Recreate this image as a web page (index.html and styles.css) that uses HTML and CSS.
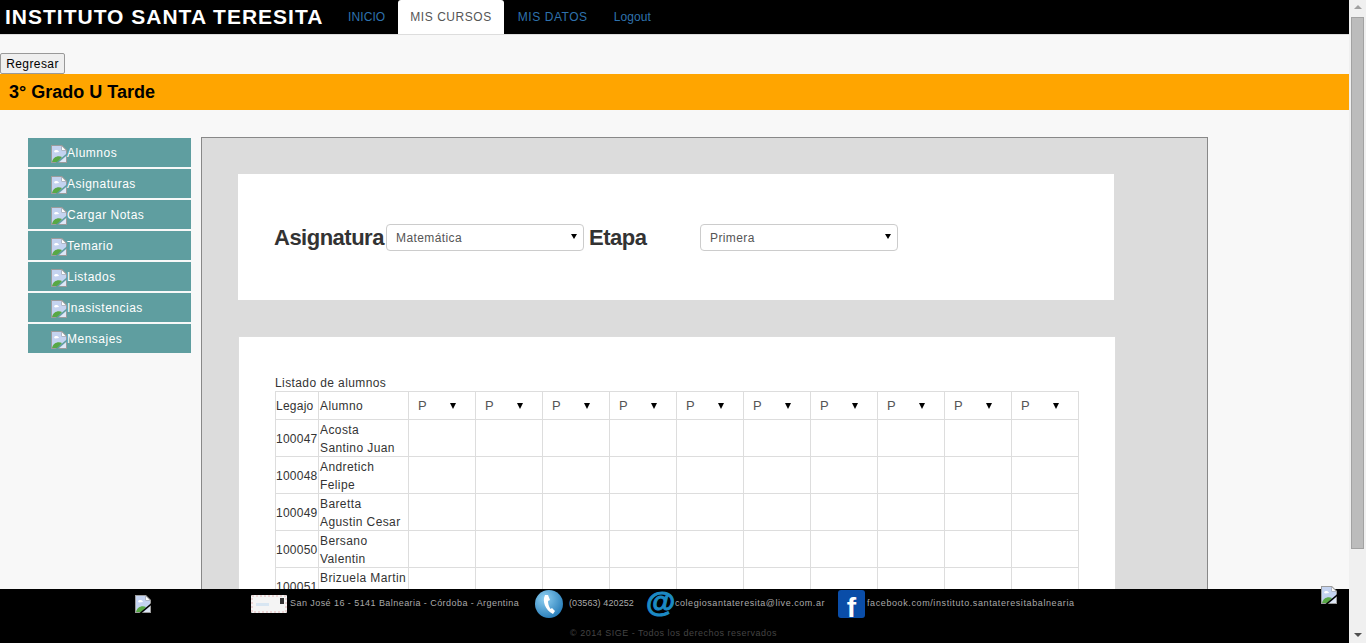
FILE: index.html
```html
<!DOCTYPE html>
<html lang="es">
<head>
    <meta charset="UTF-8">
    <meta name="viewport" content="width=device-width, initial-scale=1.0">
    <title>Instituto Santa Teresita</title>
    <link rel="stylesheet" href="styles.css">
</head>
<body>
    <svg class="defs" width="0" height="0">
        <defs>
            <radialGradient id="ball" cx="35%" cy="30%" r="80%">
                <stop offset="0" stop-color="#8fd0f2"/>
                <stop offset="1" stop-color="#1f76b4"/>
            </radialGradient>
            <mask id="tear" maskUnits="userSpaceOnUse" x="0" y="0" width="16" height="18">
                <rect width="16" height="18" fill="#fff"/>
                <path d="M17 8.500L5 18.500" stroke="#000" stroke-width="1.500"/>
            </mask>
        </defs>
        <symbol id="broken" viewBox="0 0 16 18">
            <g mask="url(#tear)">
                <path d="M0 0H11L16 5V18H0Z" fill="#9c9c9c"/>
                <path d="M1 1H10.500V5.500H15V17H1Z" fill="#c4d3f0"/>
                <path d="M3 6.500C4 4.500 7 4.500 8 7L4 7.500Z" fill="#fff"/>
                <path d="M1 17C2 12 7 10 11 12L7 17Z" fill="#58a845"/>
                <path d="M11 1.500L14.500 5H11Z" fill="#fff"/>
                <path d="M15 11V17H9Z" fill="#dfe7f6"/>
            </g>
        </symbol>
    </svg>
    <div class="shell">
        <div class="window">
            <div class="page">
                <nav class="topbar">
                    <a class="brand">INSTITUTO SANTA TERESITA</a>
                    <a class="tab first">INICIO</a>
                    <a class="tab active wide">MIS CURSOS</a>
                    <a class="tab wide">MIS DATOS</a>
                    <a class="tab">Logout</a>
                </nav>
                <div class="back-row"><button class="back">Regresar</button></div>
                <div class="course">3° Grado U Tarde</div>
                <div class="content">
                    <ul class="side">
                        <li><svg class="broken"><use href="#broken"/></svg>Alumnos</li>
                        <li><svg class="broken"><use href="#broken"/></svg>Asignaturas</li>
                        <li><svg class="broken"><use href="#broken"/></svg>Cargar Notas</li>
                        <li><svg class="broken"><use href="#broken"/></svg>Temario</li>
                        <li><svg class="broken"><use href="#broken"/></svg>Listados</li>
                        <li><svg class="broken"><use href="#broken"/></svg>Inasistencias</li>
                        <li><svg class="broken"><use href="#broken"/></svg>Mensajes</li>
                    </ul>
                    <div class="panel">
                        <div class="filters">
                            <label class="filter-label">Asignatura</label>
                            <div class="pick"><select><option>Matemática</option></select></div>
                            <label class="filter-label short">Etapa</label>
                            <div class="pick"><select><option>Primera</option></select></div>
                        </div>
                        <div class="list-box">
                            <div class="list-title">Listado de alumnos</div>
                            <table class="grades">
                                <thead>
                                    <tr>
                                        <th class="col-leg">Legajo</th>
                                        <th class="col-name">Alumno</th>
                                        <th><div class="mark">P</div></th>
                                        <th><div class="mark">P</div></th>
                                        <th><div class="mark">P</div></th>
                                        <th><div class="mark">P</div></th>
                                        <th><div class="mark">P</div></th>
                                        <th><div class="mark">P</div></th>
                                        <th><div class="mark">P</div></th>
                                        <th><div class="mark">P</div></th>
                                        <th><div class="mark">P</div></th>
                                        <th><div class="mark">P</div></th>
                                    </tr>
                                </thead>
                                <tbody>
                                    <tr><td>100047</td><td><div class="who">Acosta<br>Santino Juan</div></td><td></td><td></td><td></td><td></td><td></td><td></td><td></td><td></td><td></td><td></td></tr>
                                    <tr><td>100048</td><td><div class="who">Andretich<br>Felipe</div></td><td></td><td></td><td></td><td></td><td></td><td></td><td></td><td></td><td></td><td></td></tr>
                                    <tr><td>100049</td><td><div class="who">Baretta<br>Agustin Cesar</div></td><td></td><td></td><td></td><td></td><td></td><td></td><td></td><td></td><td></td><td></td></tr>
                                    <tr><td>100050</td><td><div class="who">Bersano<br>Valentin</div></td><td></td><td></td><td></td><td></td><td></td><td></td><td></td><td></td><td></td><td></td></tr>
                                    <tr><td>100051</td><td><div class="who">Brizuela Martin<br>&nbsp;</div></td><td></td><td></td><td></td><td></td><td></td><td></td><td></td><td></td><td></td><td></td></tr>
                                </tbody>
                            </table>
                        </div>
                    </div>
                </div>
            </div>
            <footer class="foot">
                <svg class="broken foot-logo"><use href="#broken"/></svg>
                <svg class="letter" viewBox="0 0 36 18">
                    <rect width="36" height="18" rx="1" fill="#f4f4f4"/>
                    <rect x="1" y="1" width="34" height="16" fill="none" stroke="#e2b4b4" stroke-dasharray="2 2"/>
                    <rect x="5" y="8" width="13" height="3" fill="#d8e6f2"/>
                    <rect x="29" y="3" width="4" height="6" fill="#333"/>
                </svg>
                <span class="foot-text addr">San José 16 - 5141 Balnearia - Córdoba - Argentina</span>
                <svg class="phone" viewBox="0 0 28 28">
                    <circle cx="14" cy="14" r="14" fill="url(#ball)"/>
                    <path d="M10 5C7 11 10 20 18 24L20 21L17 18L15.500 19C13.500 16 13 13 13 11L15 10L13 5Z" fill="#fff"/>
                </svg>
                <span class="foot-text tel">(03563) 420252</span>
                <span class="at">@</span>
                <span class="foot-text mail">colegiosantateresita@live.com.ar</span>
                <span class="fb">f</span>
                <span class="foot-text face">facebook.com/instituto.santateresitabalnearia</span>
                <svg class="broken foot-right"><use href="#broken"/></svg>
                <div class="copy">© 2014 SIGE - Todos los derechos reservados</div>
            </footer>
        </div>
        <div class="scroll">
            <div class="arrow-up"></div>
            <div class="thumb"></div>
            <div class="arrow-down"></div>
        </div>
    </div>
</body>
</html>
```

FILE: styles.css
```css
html, body {
    margin: 0;
    padding: 0;
    height: 100%;
    overflow: hidden;
}

body {
    font-family: "Liberation Sans", Arial, sans-serif;
    font-size: 12px;
    color: #333;
    background: #f8f8f8;
}

.defs {
    position: absolute;
}

.shell {
    display: flex;
    height: 100vh;
}

.window {
    flex: 1;
    min-width: 0;
    display: flex;
    flex-direction: column;
    position: relative;
}

.page {
    flex: 1;
    min-height: 0;
    overflow: hidden;
}

/* top bar */
.topbar {
    display: flex;
    height: 34px;
    background: #000;
    border-bottom: 1px solid #ddd;
}

.brand {
    width: 331px;
    padding-left: 5px;
    font-size: 21px;
    font-weight: bold;
    line-height: 34px;
    letter-spacing: 1px;
    color: #fff;
}

.tab {
    padding: 0 12px;
    margin-right: 2px;
    line-height: 35px;
    letter-spacing: 0.1px;
    color: #2f72ad;
}

.tab.first {
    margin-right: 1px;
}

.tab.wide {
    letter-spacing: 0.55px;
}

.tab.active {
    height: 34px;
    background: #fff;
    color: #555;
    border-radius: 3px 3px 0 0;
}

.back-row {
    height: 39px;
    display: flex;
    align-items: flex-end;
}

.back {
    width: 65px;
    height: 21px;
    padding: 1px 0 0;
    font-family: inherit;
    font-size: 12px;
    letter-spacing: 0.4px;
    color: #000;
    background: #efefef;
    border: 1px solid #999;
    border-radius: 2px;
}

.course {
    height: 36px;
    padding-left: 9px;
    font-size: 18px;
    font-weight: bold;
    line-height: 36px;
    color: #000;
    background: #ffa500;
}

.content {
    display: flex;
    align-items: flex-start;
    padding: 27px 0 0 28px;
}

/* side menu */
.side {
    width: 163px;
    margin: 1px 10px 0 0;
    padding: 0;
    list-style: none;
}

.side li {
    display: flex;
    align-items: center;
    height: 29px;
    margin-bottom: 2px;
    padding-left: 23px;
    letter-spacing: 0.5px;
    color: #fff;
    background: #5f9ea0;
}

.broken {
    width: 16px;
    height: 18px;
    flex: none;
}

.side .broken {
    margin-top: 3px;
}

/* main panel */
.panel {
    width: 969px;
    padding: 36px 0 0 36px;
    border: 1px solid #888;
    background: #dcdcdc;
}

.filters {
    display: flex;
    align-items: center;
    width: 840px;
    height: 126px;
    padding-left: 36px;
    margin-bottom: 36px;
    background: #fff;
}

.filter-label {
    width: 112px;
    padding-top: 1px;
    font-size: 22px;
    font-weight: bold;
    letter-spacing: -0.5px;
    color: #333;
}

.filter-label.short {
    width: 111px;
}

.pick {
    position: relative;
    width: 198px;
    height: 27px;
    margin-right: 5px;
}

.pick::after {
    content: "";
    position: absolute;
    right: 7px;
    top: 10px;
    border: 3px solid transparent;
    border-top: 5px solid #000;
    border-bottom: 0;
}

.pick select {
    width: 100%;
    height: 27px;
    padding: 2px 0 0 9px;
    font-family: inherit;
    font-size: 12px;
    letter-spacing: 0.4px;
    color: #555;
    background: #fff;
    border: 1px solid #ccc;
    border-radius: 4px;
    appearance: none;
}

.list-box {
    width: 804px;
    height: 400px;
    padding: 39px 36px 0 36px;
    background: #fff;
    border: 1px solid #ddd;
}

.list-title {
    height: 15px;
    letter-spacing: 0.4px;
    line-height: 15px;
}

.grades {
    border-collapse: collapse;
    table-layout: fixed;
    width: 804px;
    letter-spacing: 0.4px;
}

.grades th, .grades td {
    padding: 0 1px;
    border: 1px solid #ddd;
    font-weight: normal;
    text-align: left;
    line-height: 18px;
}

.grades th:first-child, .grades td:first-child {
    padding-left: 0;
    padding-right: 0;
    letter-spacing: 0.25px;
}

.grades td:first-child {
    padding-top: 2px;
}

.who {
    margin: 1px 0 -1px;
}

.grades thead tr {
    height: 28px;
}

.grades tbody tr {
    height: 37px;
}

.col-leg {
    width: 42px;
}

.col-name {
    width: 87px;
}

.mark {
    position: relative;
    padding-left: 8px;
    color: #555;
    font-size: 13px;
}

.mark::after {
    content: "";
    position: absolute;
    right: 18px;
    top: 6px;
    border: 3px solid transparent;
    border-top: 6px solid #000;
    border-bottom: 0;
}

/* footer */
.foot {
    flex: none;
    height: 54px;
    position: relative;
    display: flex;
    align-items: flex-start;
    flex-wrap: wrap;
    align-content: flex-start;
    background: #000;
    color: #aaa;
}

.foot-logo {
    margin: 6px 100px 0 135px;
}

.letter {
    width: 36px;
    height: 18px;
    margin: 6px 3px 0 0;
}

.foot-text {
    margin-top: 9px;
    font-size: 9px;
    letter-spacing: 0.6px;
    white-space: nowrap;
}

.addr {
    width: 245px;
    letter-spacing: 0.44px;
}

.phone {
    width: 28px;
    height: 28px;
    margin: 1px 6px 0 0;
}

.tel {
    width: 77px;
    letter-spacing: 0.1px;
}

.at {
    width: 29px;
    margin-top: -3px;
    font-size: 30px;
    font-weight: bold;
    line-height: 32px;
    color: #1c8ac4;
    -webkit-text-stroke: 1px #1c8ac4;
}

.mail {
    width: 163px;
    letter-spacing: 0.54px;
}

.fb {
    width: 27px;
    height: 28px;
    box-sizing: border-box;
    padding-top: 4px;
    margin: 1px 2px 0 0;
    font-size: 28px;
    font-weight: bold;
    line-height: 28px;
    text-align: center;
    color: #fff;
    background: #0a4da8;
    border-radius: 3px;
}

.foot-right {
    position: absolute;
    right: 12px;
    top: -3px;
}

.copy {
    position: absolute;
    left: 570px;
    top: 39px;
    font-size: 9px;
    letter-spacing: 0.5px;
    color: #444;
}

/* scrollbar */
.scroll {
    flex: none;
    width: 17px;
    position: relative;
    background: #f0f0f0;
}

.thumb {
    position: absolute;
    left: 2px;
    top: 17px;
    width: 13px;
    height: 532px;
    background: #bcbcbc;
    border: 1px solid #a2a2a2;
    box-sizing: border-box;
}

.arrow-up, .arrow-down {
    position: absolute;
    left: 5px;
    border: 4px solid transparent;
}

.arrow-up {
    top: 5px;
    border-top: 0;
    border-bottom: 4px solid #a0a0a0;
}

.arrow-down {
    bottom: 6px;
    border-bottom: 0;
    border-top: 4px solid #505050;
}
```
